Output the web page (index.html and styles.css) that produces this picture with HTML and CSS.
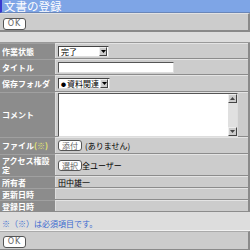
FILE: index.html
```html
<!DOCTYPE html>
<html>

<head>
  <meta charset="utf-8">
  <title>文書の登録</title>
  <link rel="stylesheet" href="styles.css">
</head>

<body>
  <div class="titlebar"><span class="title-text">文書の登録</span></div>

  <div class="toolbar">
    <span class="btn btn-ok">OK</span>
  </div>
  <div class="strip"></div>

  <div class="form">
    <div class="row r-status">
      <div class="label">作業状態</div>
      <div class="value">
        <span class="select sel-status">完了<span class="arrow"><svg width="5" height="3" viewBox="0 0 5 3"><path d="M0 0h5L2.5 3z" fill="#000"/></svg></span></span>
      </div>
    </div>
    <div class="row r-title">
      <div class="label">タイトル</div>
      <div class="value"><span class="textbox"></span></div>
    </div>
    <div class="row r-folder">
      <div class="label">保存フォルダ</div>
      <div class="value">
        <span class="select sel-folder"><span class="dot">●</span>資料関連<span class="arrow"><svg width="5" height="3" viewBox="0 0 5 3"><path d="M0 0h5L2.5 3z" fill="#000"/></svg></span></span>
      </div>
    </div>
    <div class="row r-comment">
      <div class="label">コメント</div>
      <div class="value">
        <div class="textarea">
          <div class="scroll">
            <span class="sb-btn"><svg width="5" height="3" viewBox="0 0 5 3"><path d="M0 3h5L2.5 0z" fill="#444"/></svg></span>
            <span class="sb-track"></span>
            <span class="sb-btn"><svg width="5" height="3" viewBox="0 0 5 3"><path d="M0 0h5L2.5 3z" fill="#444"/></svg></span>
          </div>
        </div>
      </div>
    </div>
    <div class="row r-file">
      <div class="label">ファイル<span class="req">(※)</span></div>
      <div class="value"><span class="btn">添付</span><span class="after">(ありません)</span></div>
    </div>
    <div class="row r-access">
      <div class="label">アクセス権設定</div>
      <div class="value"><span class="btn">選択</span>全ユーザー</div>
    </div>
    <div class="row r-small">
      <div class="label">所有者</div>
      <div class="value">田中雄一</div>
    </div>
    <div class="row r-small">
      <div class="label">更新日時</div>
      <div class="value"></div>
    </div>
    <div class="row r-small">
      <div class="label">登録日時</div>
      <div class="value"></div>
    </div>
  </div>

  <div class="note">※（※）は必須項目です。</div>

  <div class="toolbar footer">
    <span class="btn btn-ok">OK</span>
  </div>
</body>

</html>
```

FILE: styles.css
```css
body {
  margin: 0;
  width: 250px;
  height: 250px;
  overflow: hidden;
  background: #cccccc;
  font: 8px "Noto Sans CJK JP", sans-serif;
  color: #000000;
}

.titlebar {
  box-sizing: border-box;
  height: 13px;
  display: flex;
  align-items: center;
  padding-left: 2px;
  background: #7ea5e6;
  border-left: 2px solid #3a3ad0;
  border-bottom: 1px solid #6a86b8;
  color: #ffffff;
  font-size: 11.5px;
}

.title-text {
  line-height: 12px;
}

.toolbar {
  box-sizing: border-box;
  height: 19px;
  padding: 3px 0 0 3px;
  background: #cccccc;
  border-top: 1px solid #e2e2e2;
  border-bottom: 2px solid #8a8a8a;
  border-right: 2px solid #8a8a8a;
}

.strip {
  box-sizing: border-box;
  height: 11px;
  background: #dddddd;
  border-bottom: 1px solid #999999;
}

.btn {
  display: inline-flex;
  align-items: center;
  justify-content: center;
  box-sizing: border-box;
  height: 11px;
  padding: 0 3px;
  background: #ffffff;
  border: 1px solid #555555;
  border-radius: 3px;
  color: #666666;
  font-size: 8px;
  vertical-align: middle;
}

.btn-ok {
  width: 23px;
  height: 12px;
  letter-spacing: 1px;
  font-family: "DejaVu Sans", sans-serif;
}

.form {
  border-right: 2px solid #8a8a8a;
}

.row {
  display: flex;
  box-sizing: border-box;
  border-bottom: 1px solid #8c8c8c;
}

.label {
  box-sizing: border-box;
  width: 55px;
  display: flex;
  align-items: center;
  padding-left: 2px;
  background: #8c8c8c;
  border-top: 1px solid #a0a0a0;
  color: #ffffff;
  font-weight: bold;
  line-height: 9px;
}

.value {
  flex: 1;
  display: flex;
  align-items: center;
  padding-left: 2px;
  background: #cccccc;
  border-top: 1px solid #e4e4e4;
  border-left: 1px solid #dddddd;
  white-space: nowrap;
}

.req {
  color: #e8e870;
}

.r-status { height: 16px; }
.r-title { height: 16px; }
.r-folder { height: 17px; }
.r-comment { height: 45px; }
.r-file { height: 17px; }
.r-access { height: 22px; }
.r-small { height: 12px; }

.select {
  display: inline-flex;
  align-items: center;
  box-sizing: border-box;
  height: 11px;
  padding-left: 2px;
  background: #ffffff;
  border: 1px solid #444444;
  border-right-color: #dddddd;
  border-bottom-color: #dddddd;
  position: relative;
}

.sel-status { width: 51px; }
.sel-folder { width: 52px; }

.dot {
  font-size: 5px;
  margin-right: 1px;
}

.arrow {
  position: absolute;
  right: 1px;
  top: 0;
  width: 8px;
  height: 9px;
  box-sizing: border-box;
  display: flex;
  align-items: center;
  justify-content: center;
  background: #cccccc;
  border: 1px solid #eeeeee;
  border-right-color: #444444;
  border-bottom-color: #444444;
}

.textbox {
  display: block;
  box-sizing: border-box;
  width: 116px;
  height: 11px;
  background: #ffffff;
  border: 1px solid #555555;
  border-right-color: #dddddd;
  border-bottom-color: #dddddd;
}

.textarea {
  box-sizing: border-box;
  width: 180px;
  height: 44px;
  display: flex;
  justify-content: flex-end;
  background: #ffffff;
  border: 1px solid #555555;
  border-right-color: #dddddd;
  border-bottom-color: #dddddd;
}

.scroll {
  width: 9px;
  display: flex;
  flex-direction: column;
  background: #e0e0e0;
}

.sb-btn {
  box-sizing: border-box;
  height: 9px;
  display: flex;
  align-items: center;
  justify-content: center;
  background: #cccccc;
  border: 1px solid #eeeeee;
  border-right-color: #444444;
  border-bottom-color: #444444;
}

.sb-track {
  flex: 1;
}

.after {
  margin-left: 3px;
}

.note {
  box-sizing: border-box;
  height: 19px;
  padding: 7px 0 0 2px;
  background: #dddddd;
  border-bottom: 1px solid #f2f2f2;
  color: #3a6ad0;
  line-height: 10px;
}

.footer {
  height: 20px;
  border-top: 1px solid #aaaaaa;
}
```
